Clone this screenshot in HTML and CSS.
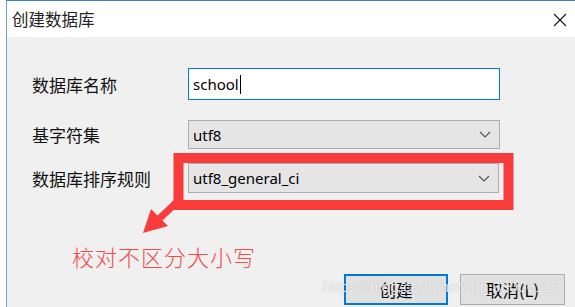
FILE: index.html
```html
<!DOCTYPE html>
<html lang="zh-CN">
<head>
    <meta charset="UTF-8">
    <meta name="viewport" content="width=device-width, initial-scale=1.0">
    <title>创建数据库</title>
    <link rel="stylesheet" href="styles.css">
</head>
<body>
<div class="screen">
    <div class="edge"></div>

    <div class="dialog">
        <!-- Title bar -->
        <div class="titlebar">
            <span class="title">创建数据库</span>
            <svg class="close" width="14" height="14" viewBox="0 0 14 14">
                <path d="M1 1 L13 13 M13 1 L1 13" stroke="#222" stroke-width="1.3" fill="none"/>
            </svg>
        </div>

        <div class="content">
            <div class="form">
                <label class="label row-name" for="dbName">数据库名称</label>
                <div class="field text-field row-name">
                    <span id="dbName">school</span><span class="caret"></span>
                </div>

                <label class="label row-charset">基字符集</label>
                <div class="field select-field row-charset">
                    <span>utf8</span>
                    <svg class="chevron" width="12" height="7" viewBox="0 0 12 7">
                        <path d="M1 1 L6 6 L11 1" stroke="#555" stroke-width="1.2" fill="none"/>
                    </svg>
                </div>

                <label class="label row-collation">数据库排序规则</label>
                <div class="field select-field row-collation collation">
                    <span>utf8_general_ci</span>
                    <svg class="chevron" width="12" height="7" viewBox="0 0 12 7">
                        <path d="M1 1 L6 6 L11 1" stroke="#555" stroke-width="1.2" fill="none"/>
                    </svg>
                </div>
            </div>

            <div class="buttons">
                <button class="btn btn-default" type="button">创建</button>
                <button class="btn" type="button">取消(L)</button>
            </div>
        </div>
    </div>

    <!-- red annotation drawn over the dialog -->
    <svg class="annotation" width="575" height="307" viewBox="0 0 575 307">
        <rect x="178.5" y="158" width="330" height="47" stroke="#f83b3b" stroke-width="10" fill="none"/>
        <line x1="181" y1="198" x2="159" y2="219" stroke="#f83b3b" stroke-width="7"/>
        <polygon points="143,233 151,209 168,226" fill="#f83b3b"/>
    </svg>
    <div class="note">校对不区分大小写</div>

    <div class="watermark">https://blog.csdn.net/qq_38006115</div>
</div>
</body>
</html>
```

FILE: styles.css
```css
body {
    margin: 0;
    background-color: #f0f0f0;
    font-family: "Noto Sans", "Noto Sans CJK SC", sans-serif;
    color: #000;
}

.screen {
    position: relative;
    display: flex;
    width: 575px;
    height: 307px;
    overflow: hidden;
}

.edge {
    width: 6px;
    background-color: #fff;
}

.dialog {
    flex: 1;
    display: flex;
    flex-direction: column;
    border-left: 1px solid #6d9fd6;
    border-top: 1px solid #3b7fc9;
    background-color: #f0f0f0;
}

.titlebar {
    height: 36px;
    display: flex;
    align-items: center;
    justify-content: space-between;
    padding: 0 8px 0 5px;
    background-color: #fff;
}

.title {
    font-family: "Noto Sans CJK SC", sans-serif;
    font-size: 16.5px;
    color: #222;
}

.close {
    margin-top: 1px;
}

.content {
    flex: 1;
    display: flex;
    flex-direction: column;
}

.form {
    display: grid;
    grid-template-columns: 156px 312px;
    grid-template-rows: 32px 49px 44px;
    padding: 31px 0 0 25px;
}

.label {
    display: flex;
    align-items: center;
    font-family: "Noto Sans CJK SC", sans-serif;
    font-size: 17px;
    color: #111;
}

.row-charset.label,
.row-collation.label {
    align-self: end;
    height: 29px;
}

.row-collation.label {
    height: 30px;
}

.field {
    box-sizing: border-box;
    display: flex;
    align-items: center;
    padding: 0 4px;
    font-size: 15px;
}

.text-field {
    height: 32px;
    background-color: #fff;
    border: 1px solid #0078d7;
}

.caret {
    width: 1px;
    height: 19px;
    margin-left: 1px;
    background-color: #000;
}

.select-field {
    justify-content: space-between;
    height: 29px;
    align-self: end;
    background-color: #e5e5e5;
    border: 1px solid #adadad;
    padding-right: 8px;
}

.collation {
    width: 311px;
    height: 30px;
}

.buttons {
    display: flex;
    justify-content: flex-end;
    gap: 12px;
    margin-top: auto;
    padding: 0 10px 2px 0;
}

.btn {
    width: 105px;
    height: 31px;
    box-sizing: border-box;
    background-color: #e1e1e1;
    border: 1px solid #adadad;
    font-family: "Noto Sans CJK SC", sans-serif;
    font-size: 16.5px;
    color: #000;
    padding: 0;
}

.btn-default {
    width: 104px;
    border: 2px solid #0078d7;
}

.annotation {
    position: absolute;
    left: 0;
    top: 0;
    pointer-events: none;
}

.note {
    position: absolute;
    left: 72px;
    top: 240px;
    font-family: "Noto Sans CJK SC", sans-serif;
    font-size: 22px;
    font-weight: 300;
    letter-spacing: 1px;
    color: #f34a4a;
    line-height: 1.5;
}

.watermark {
    position: absolute;
    left: 323px;
    top: 278px;
    font-family: "Liberation Sans", Arial, sans-serif;
    font-size: 15.5px;
    color: rgba(255, 255, 255, 0.8);
    text-shadow: 0 0 1px rgba(110, 110, 110, 0.5);
    white-space: nowrap;
}
```
